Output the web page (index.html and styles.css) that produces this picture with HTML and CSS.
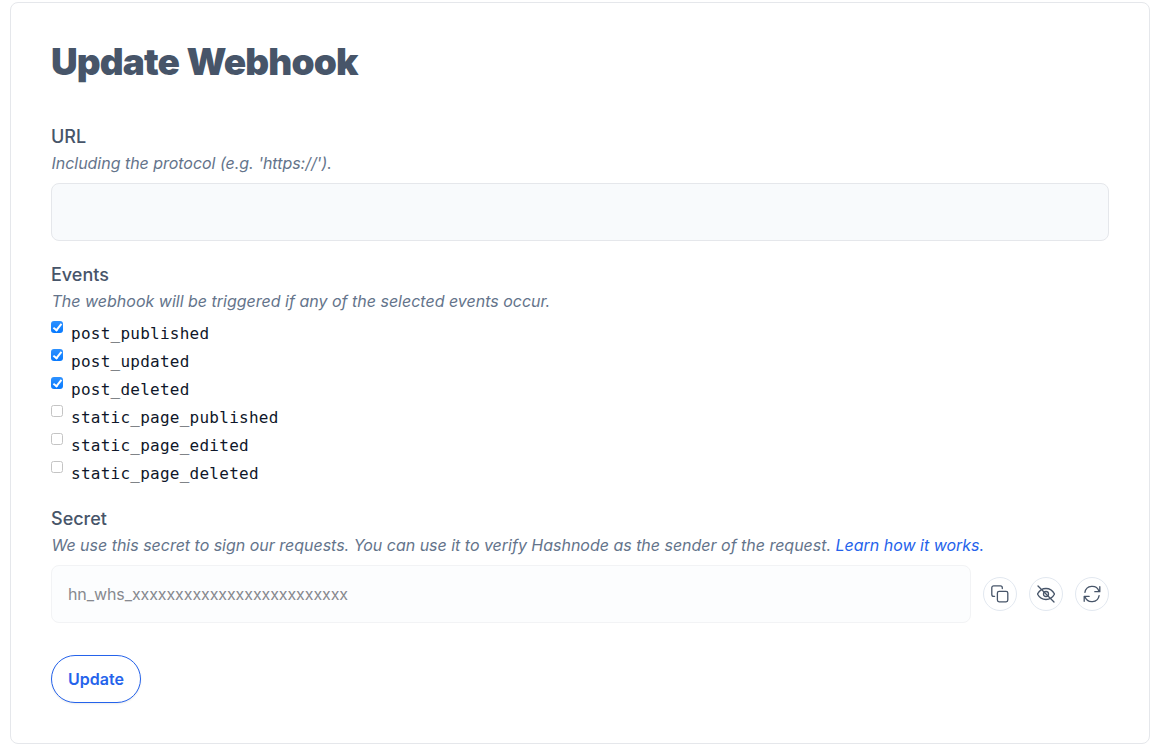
FILE: index.html
```html
<!DOCTYPE html>
<html lang="en">
<head>
<meta charset="utf-8">
<title>Update Webhook</title>
<link rel="stylesheet" href="styles.css">
</head>
<body>
<main class="card">
  <h1 class="title">Update Webhook</h1>
  <form>
    <section class="field">
      <label class="label" for="url">URL</label>
      <p class="hint hint-url">Including the protocol (e.g. 'https://').</p>
      <input class="input" id="url" type="text">
    </section>
    <section class="field events">
      <h2 class="label">Events</h2>
      <p class="hint hint-events">The webhook will be triggered if any of the selected events occur.</p>
      <ul class="list">
        <li><label class="event"><input class="check" type="checkbox" checked><span>post_published</span></label></li>
        <li><label class="event"><input class="check" type="checkbox" checked><span>post_updated</span></label></li>
        <li><label class="event"><input class="check" type="checkbox" checked><span>post_deleted</span></label></li>
        <li><label class="event"><input class="check" type="checkbox"><span>static_page_published</span></label></li>
        <li><label class="event"><input class="check" type="checkbox"><span>static_page_edited</span></label></li>
        <li><label class="event"><input class="check" type="checkbox"><span>static_page_deleted</span></label></li>
      </ul>
    </section>
    <section class="field secret">
      <h2 class="label">Secret</h2>
      <p class="hint hint-secret">We use this secret to sign our requests. You can use it to verify Hashnode as the sender of the request. <a class="link" href="#">Learn how it works.</a></p>
      <div class="row">
        <div class="input disabled">hn_whs_xxxxxxxxxxxxxxxxxxxxxxxxx</div>
        <button class="icon-btn" type="button" aria-label="Copy">
          <svg viewBox="0 0 18 18"><path d="M3.600 11.300H2.700A1.900 1.900 0 0 1 .8 9.400V2.700A1.900 1.900 0 0 1 2.700.8H9.400A1.900 1.900 0 0 1 11.300 2.700V3.600"/><rect x="6.400" y="6.400" width="10.400" height="10.400" rx="1.700"/></svg>
        </button>
        <button class="icon-btn" type="button" aria-label="Show secret">
          <svg viewBox="0 0 18 18"><path d="M.5 9C2.500 5.200 5.300 3.500 9 3.500S15.500 5.200 17.500 9C15.500 12.800 12.700 14.500 9 14.500S2.500 12.800.5 9Z"/><circle cx="9" cy="9" r="2.500"/><path d="m1 1 16 16"/></svg>
        </button>
        <button class="icon-btn" type="button" aria-label="Regenerate">
          <svg viewBox="0 0 18 18"><path d="M1.900 7.400A7.300 7.300 0 0 1 16 6.200M16.800 1.700v5h-5M16.100 10.600A7.300 7.300 0 0 1 2 11.800M1.200 16.300v-5h5"/></svg>
        </button>
      </div>
    </section>
    <button class="update" type="button">Update</button>
  </form>
</main>
</body>
</html>
```

FILE: styles.css
```css
* { box-sizing: border-box; }

body {
  margin: 0;
  padding: 2px 6px 7px 10px;
  background: #fff;
  font-family: Inter, "Liberation Sans", sans-serif;
  font-size: 16px;
  line-height: 24px;
  color: #0f172a;
}

.card {
  height: 742px;
  padding: 39px 40px;
  border: 1px solid #e5e7eb;
  border-radius: 8px;
}

.title {
  margin: 0 0 41px;
  font-size: 37px;
  line-height: 40px;
  font-weight: 900;
  letter-spacing: -0.9px;
  word-spacing: 1px;
  color: #475569;
}

.label {
  display: block;
  margin: 0;
  font-size: 18px;
  line-height: 28px;
  font-weight: 500;
  color: #475569;
}

.hint {
  margin: 0 0 8px;
  font-style: italic;
  line-height: 24px;
  white-space: nowrap;
  color: #64748b;
}

.hint-url {
  padding-left: 0.5px;
  letter-spacing: -0.03px;
}

.hint-secret {
  padding-left: 0.5px;
  letter-spacing: -0.015px;
}

.link {
  color: #2563eb;
  text-decoration: none;
}

.input {
  display: block;
  width: 100%;
  height: 58px;
  padding: 16px;
  border: 1px solid #e5e7eb;
  border-radius: 8px;
  background: #f8fafc;
  font: inherit;
}

.events, .secret { margin-top: 20px; }

.hint-events {
  margin-bottom: 4px;
  padding-left: 0.5px;
}

.list {
  margin: 0;
  padding: 0;
  list-style: none;
}

.event {
  display: flex;
  gap: 8px;
  height: 28px;
  font-family: "DejaVu Sans Mono", monospace;
  font-size: 16px;
  line-height: 34px;
  letter-spacing: 0.25px;
}

.check {
  appearance: none;
  flex: none;
  display: grid;
  place-items: center;
  width: 12px;
  height: 12px;
  margin: 4px 0 0;
  border: 1px solid #c4c4c4;
  border-radius: 2.5px;
  background: #fff;
}

.check:checked {
  border: 0;
  border-radius: 3px;
  background: linear-gradient(#2d91ff, #087aff);
}

.check:checked::before {
  content: "";
  box-sizing: border-box;
  width: 5px;
  height: 9px;
  margin-top: -2px;
  border: solid #fff;
  border-width: 0 2px 2px 0;
  transform: rotate(38deg);
}

.row {
  display: flex;
  align-items: center;
  gap: 12px;
}

.disabled {
  flex: 1;
  border-color: #f2f3f5;
  background: #fcfdfe;
  letter-spacing: -0.09px;
  color: #87898f;
}

.icon-btn {
  display: flex;
  align-items: center;
  justify-content: center;
  width: 34px;
  height: 34px;
  padding: 0;
  border: 1px solid #e2e8f0;
  border-radius: 50%;
  background: #fff;
}

.icon-btn svg {
  width: 18px;
  height: 18px;
  fill: none;
  stroke: #475569;
  stroke-width: 1.3;
  stroke-linecap: round;
  stroke-linejoin: round;
}

.update {
  width: 90px;
  height: 48px;
  margin-top: 32px;
  padding: 0;
  border: 1px solid #2563eb;
  border-radius: 24px;
  background: #fff;
  box-shadow: 0 1px 2px rgba(0, 0, 0, 0.08);
  font: 600 16px/24px Inter, "Liberation Sans", sans-serif;
  color: #2563eb;
}
```
